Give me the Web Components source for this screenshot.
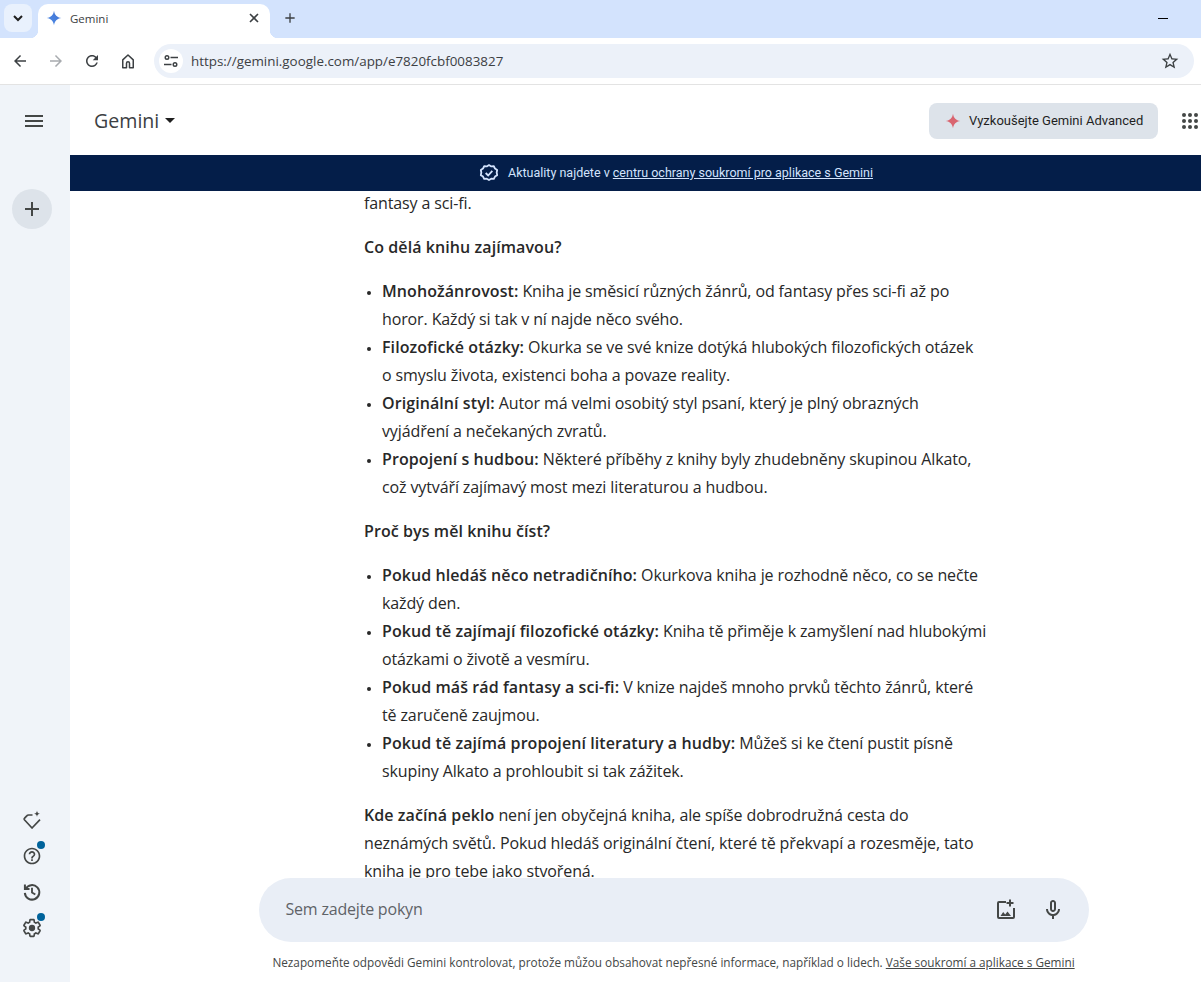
<!DOCTYPE html>
<html lang="cs">
<head>
<meta charset="utf-8">
<title>Gemini</title>
<style>
  html, body { margin: 0; height: 100%; overflow: hidden; background: #fff; }
  body { display: flex; flex-direction: column; font-family: "Open Sans", sans-serif; color: #1f1f1f; }
  chat-view b { font-weight: 600; letter-spacing: .08px; }
  chat-view li::marker { font-size: 12px; }
</style>
</head>
<body>
<tab-strip></tab-strip>
<tool-bar url="https://gemini.google.com/app/e7820fcbf0083827"></tool-bar>
<gemini-app>
  <side-nav slot="nav"></side-nav>
  <app-header slot="main"></app-header>
  <notice-banner slot="main">
    Aktuality najdete v <a>centru ochrany soukromí pro aplikace s Gemini</a>
  </notice-banner>
  <chat-view slot="main">
    <p>fantasy a sci-fi.</p>
    <p><b>Co dělá knihu zajímavou?</b></p>
    <ul>
      <li><b>Mnohožánrovost:</b> Kniha je směsicí různých žánrů, od fantasy přes sci-fi až po horor. Každý si tak v ní najde něco svého.</li>
      <li><b>Filozofické otázky:</b> Okurka se ve své knize dotýká hlubokých filozofických otázek o&nbsp;smyslu života, existenci boha a povaze reality.</li>
      <li><b>Originální styl:</b> Autor má velmi osobitý styl psaní, který je plný obrazných vyjádření a nečekaných zvratů.</li>
      <li><b>Propojení s hudbou:</b> Některé příběhy z knihy byly zhudebněny skupinou Alkato, což vytváří zajímavý most mezi literaturou a hudbou.</li>
    </ul>
    <p><b>Proč bys měl knihu číst?</b></p>
    <ul>
      <li><b>Pokud hledáš něco netradičního:</b> Okurkova kniha je rozhodně něco, co se nečte každý den.</li>
      <li><b>Pokud tě zajímají filozofické otázky:</b> Kniha tě přiměje k zamyšlení nad hlubokými otázkami o životě a vesmíru.</li>
      <li><b>Pokud máš rád fantasy a sci-fi:</b> V knize najdeš mnoho prvků těchto žánrů, které tě zaručeně zaujmou.</li>
      <li><b>Pokud tě zajímá propojení literatury a hudby:</b> Můžeš si ke čtení pustit písně skupiny Alkato a prohloubit si tak zážitek.</li>
    </ul>
    <p><b>Kde začíná peklo</b> není jen obyčejná kniha, ale spíše dobrodružná cesta do neznámých světů. Pokud hledáš originální čtení, které tě překvapí a rozesměje, tato kniha je pro tebe jako stvořená.</p>
  </chat-view>
  <prompt-box slot="main"></prompt-box>
</gemini-app>
<script>
const SPARK_FAT = "M12 1C13 7.500 16.500 11 23 12 16.500 13 13 16.500 12 23 11 16.500 7.500 13 1 12 7.500 11 11 7.500 12 1z";

const define = (name, html) =>
  customElements.define(
    name,
    class extends HTMLElement {
      constructor() {
        super();
        this.attachShadow({ mode: "open" }).innerHTML = html;
      }
    }
  );

define("tab-strip", `
  <style>
    :host { display: flex; height: 38px; background: #d3e3fd; align-items: flex-start; flex: none; font-family: "Open Sans", sans-serif; }
    .list { width: 28px; height: 28px; margin: 4px 6px 0 4px; border-radius: 8px; background: #e9f1fd; display: grid; place-items: center; }
    .tab { position: relative; width: 232px; height: 34px; margin-top: 4px; background: #fff; border-radius: 10px 10px 0 0; display: flex; align-items: center; box-sizing: border-box; padding: 0 11px 6px 8px; font-size: 11.500px; color: #3c4043; }
    .tab::before, .tab::after { content: ""; position: absolute; bottom: 0; width: 8px; height: 8px; }
    .tab::before { left: -8px; background: radial-gradient(circle at 0 0, transparent 8px, #fff 8.500px); }
    .tab::after { right: -8px; background: radial-gradient(circle at 100% 0, transparent 8px, #fff 8.500px); }
    .title { margin-left: 8px; flex: 1; }
    .plus { margin: 10px 0 0 12px; }
    .min { margin: 18px 33px 0 auto; width: 10px; height: 1px; background: #000; }
    svg { display: block; }
  </style>
  <div class="list"><svg width="10" height="7" viewBox="0 0 10 7"><path d="M1 1l4 4 4-4" fill="none" stroke="#1f1f1f" stroke-width="2"/></svg></div>
  <div class="tab">
    <svg width="16" height="16" viewBox="0 0 24 24"><defs><linearGradient id="t" x1="0" y1="1" x2="1" y2="0"><stop offset="0" stop-color="#4f8ee8"/><stop offset="1" stop-color="#3f6fd0"/></linearGradient></defs><path d="${SPARK_FAT}" fill="url(#t)"/></svg>
    <span class="title">Gemini</span>
    <svg width="10" height="10" viewBox="0 0 10 10"><path d="M1 1l8 8M9 1l-8 8" stroke="#3c4043" stroke-width="1.600"/></svg>
  </div>
  <div class="plus"><svg width="16" height="16" viewBox="0 0 24 24"><path d="M19 13h-6v6h-2v-6H5v-2h6V5h2v6h6v2z" fill="#3c4043"/></svg></div>
  <div class="min"></div>
`);

customElements.define(
  "tool-bar",
  class extends HTMLElement {
    constructor() {
      super();
      this.attachShadow({ mode: "open" }).innerHTML = `
        <style>
          :host { display: flex; height: 47px; box-sizing: border-box; border-bottom: 1px solid #e3e3e3; background: #fff; align-items: center; flex: none; font-family: "Open Sans", sans-serif; padding: 0 7px 0 11px; }
          .btn { width: 18px; height: 18px; margin-right: 18px; }
          svg { display: block; }
          .omni { flex: 1; height: 34px; border-radius: 17px; background: #ecf1f9; display: flex; align-items: center; padding: 0 14px 0 5px; font-size: 13.400px; color: #3c4043; margin-left: -1px; }
          .tune { width: 24px; height: 24px; border-radius: 50%; background: #fff; display: grid; place-items: center; margin-right: 8px; }
          .url { flex: 1; }
        </style>
        <svg class="btn" viewBox="0 0 24 24"><path d="M20 11H7.830l5.590-5.590L12 4l-8 8 8 8 1.410-1.410L7.830 13H20v-2z" fill="#3c4043"/></svg>
        <svg class="btn" viewBox="0 0 24 24"><path d="M4 11h12.170l-5.590-5.590L12 4l8 8-8 8-1.410-1.410L16.170 13H4v-2z" fill="#a8abaf"/></svg>
        <svg class="btn" viewBox="0 0 24 24"><path d="M17.650 6.350C16.200 4.900 14.210 4 12 4c-4.420 0-7.990 3.580-7.990 8s3.570 8 7.990 8c3.730 0 6.840-2.550 7.730-6h-2.080c-.82 2.330-3.040 4-5.650 4-3.310 0-6-2.690-6-6s2.690-6 6-6c1.660 0 3.140.69 4.220 1.780L13 11h7V4l-2.350 2.350z" fill="#3c4043"/></svg>
        <svg class="btn" viewBox="0 0 24 24"><path d="M5 21V10.500L12 4l7 6.500V21h-5v-6a2 2 0 0 0-4 0v6z" fill="none" stroke="#3c4043" stroke-width="2" stroke-linejoin="round"/></svg>
        <div class="omni">
          <div class="tune"><svg width="16" height="16" viewBox="0 0 16 16"><g fill="none" stroke="#3c4043" stroke-width="1.400"><circle cx="4" cy="4.500" r="1.800"/><path d="M7.500 4.500H15M1 11.500h7.500"/><circle cx="12" cy="11.500" r="1.800"/></g></svg></div>
          <span class="url">${this.getAttribute("url")}</span>
          <svg width="20" height="20" viewBox="0 0 24 24"><path d="M22 9.240l-7.190-.62L12 2 9.190 8.630 2 9.240l5.460 4.730L5.820 21 12 17.270 18.180 21l-1.630-7.030L22 9.240zM12 15.400l-3.760 2.270 1-4.280-3.320-2.880 4.380-.38L12 6.100l1.710 4.040 4.380.38-3.320 2.880 1 4.280L12 15.400z" fill="#3c4043"/></svg>
        </div>`;
    }
  }
);

define("gemini-app", `
  <style>
    :host { display: flex; flex: 1; min-height: 0; }
    main { flex: 1; min-width: 0; display: flex; flex-direction: column; }
  </style>
  <slot name="nav"></slot>
  <main><slot name="main"></slot></main>
`);

define("side-nav", `
  <style>
    :host { width: 70px; flex: none; background: #f0f4f9; display: flex; flex-direction: column; align-items: center; padding: 0 6px 0 0; box-sizing: border-box; }
    svg { display: block; }
    .menu { margin: 24px 0 0 4px; }
    .new { margin-top: 56px; width: 40px; height: 40px; border-radius: 50%; background: #dde3ea; display: grid; place-items: center; }
    .bottom { margin-top: auto; padding-bottom: 44px; display: flex; flex-direction: column; gap: 16px; }
    .item { position: relative; width: 20px; height: 20px; }
    .dot { position: absolute; right: -3px; top: -5px; width: 8px; height: 8px; border-radius: 50%; background: #00639b; }
  </style>
  <svg class="menu" width="24" height="24" viewBox="0 0 24 24"><path d="M3 18h18v-2H3v2zm0-5h18v-2H3v2zm0-7v2h18V6H3z" fill="#444746"/></svg>
  <div class="new"><svg width="24" height="24" viewBox="0 0 24 24"><path d="M19 13h-6v6h-2v-6H5v-2h6V5h2v6h6v2z" fill="#444746"/></svg></div>
  <div class="bottom">
    <div class="item"><svg width="20" height="20" viewBox="0 0 20 20"><path d="M10.500 5H6.500Q5.500 5 5 5.600L2.400 8.400 Q1.800 9 2.400 9.700L10 18 18 9.700" fill="none" stroke="#444746" stroke-width="1.700" stroke-linejoin="round"/><path d="M15 .5c.3 2.200 1 3 3.200 3.300-2.200.3-2.900 1-3.200 3.200-.3-2.200-1-2.900-3.200-3.200 2.200-.3 2.900-1.100 3.200-3.300z" fill="#444746"/></svg></div>
    <div class="item"><svg width="20" height="20" viewBox="0 0 24 24"><path d="M11 18h2v-2h-2v2zm1-16C6.480 2 2 6.480 2 12s4.480 10 10 10 10-4.480 10-10S17.520 2 12 2zm0 18c-4.410 0-8-3.590-8-8s3.590-8 8-8 8 3.590 8 8-3.590 8-8 8zm0-14c-2.210 0-4 1.790-4 4h2c0-1.100.9-2 2-2s2 .9 2 2c0 2-3 1.750-3 5h2c0-2.250 3-2.500 3-5 0-2.210-1.790-4-4-4z" fill="#444746"/></svg><span class="dot"></span></div>
    <div class="item"><svg width="20" height="20" viewBox="0 0 24 24"><path d="M3.500 3v5.500h5.500M4.300 8.500A8.700 8.700 0 1 1 3.400 13" fill="none" stroke="#444746" stroke-width="2.400"/><path d="M12 7V12.500l4 2.500" fill="none" stroke="#444746" stroke-width="2.200"/></svg></div>
    <div class="item"><svg width="20" height="20" viewBox="0 0 24 24"><path d="M19.430 12.980c.04-.32.07-.64.07-.98s-.03-.66-.07-.98l2.110-1.650c.19-.15.24-.42.12-.64l-2-3.460c-.12-.22-.39-.3-.61-.22l-2.490 1c-.52-.4-1.080-.73-1.690-.98l-.38-2.650C14.460 2.180 14.250 2 14 2h-4c-.25 0-.46.18-.49.42l-.38 2.650c-.61.25-1.170.59-1.690.98l-2.490-1c-.23-.09-.49 0-.61.22l-2 3.460c-.13.22-.07.49.12.64l2.110 1.650c-.04.32-.07.65-.07.98s.03.66.07.98l-2.110 1.650c-.19.15-.24.42-.12.64l2 3.460c.12.22.39.3.61.22l2.490-1c.52.4 1.080.73 1.690.98l.38 2.650c.03.24.24.42.49.42h4c.25 0 .46-.18.49-.42l.38-2.650c.61-.25 1.170-.59 1.690-.98l2.490 1c.23.09.49 0 .61-.22l2-3.460c.12-.22.07-.49-.12-.64l-2.110-1.650z" fill="none" stroke="#444746" stroke-width="2"/><circle cx="12" cy="12" r="3.800" fill="#444746"/></svg><span class="dot"></span></div>
  </div>
`);

define("app-header", `
  <style>
    :host { display: flex; align-items: center; height: 70px; flex: none; padding: 2px 3px 0 24px; box-sizing: border-box; }
    .logo { font-size: 19.600px; color: #3c4043; margin-top: -2px; }
    .caret { margin: -2px 0 0 6px; width: 0; height: 0; border: 5px solid transparent; border-top-color: #1f1f1f; border-bottom: 0; }
    .try { margin-left: auto; width: 229px; height: 36px; box-sizing: border-box; border-radius: 8px; background: #dde3ea; display: flex; align-items: center; padding: 0 0 1px 16px; gap: 8px; font: 400 13px Roboto, sans-serif; color: #1f1f1f; }
    .apps { margin-left: 24px; display: grid; grid-template-columns: repeat(3, 4px); gap: 2px; }
    .apps i { width: 4px; height: 4px; border-radius: 50%; background: #444746; }
    svg { display: block; }
  </style>
  <span class="logo">Gemini</span><span class="caret"></span>
  <div class="try"><svg width="16" height="16" viewBox="0 0 24 24"><path d="${SPARK_FAT}" fill="#d96570"/></svg>Vyzkoušejte Gemini Advanced</div>
  <div class="apps"><i></i><i></i><i></i><i></i><i></i><i></i><i></i><i></i><i></i></div>
`);

define("notice-banner", `
  <style>
    :host { display: flex; align-items: center; justify-content: center; gap: 9px; height: 36px; flex: none; background: #041e49; color: #d3e3fd; font: 12.500px Roboto, sans-serif; padding-left: 81px; position: relative; z-index: 1; }
    ::slotted(a) { text-decoration: underline; }
    svg { display: block; }
    span { margin-top: -1px; }
  </style>
  <svg width="20" height="20" viewBox="0 0 24 24"><path d="M12 2.500l2.700 1.600 3.100-.2 1.400 2.800 2.600 1.700-.6 3.100.6 3.100-2.600 1.700-1.400 2.800-3.100-.2-2.700 1.600-2.700-1.600-3.100.2-1.400-2.800-2.600-1.700.6-3.100-.6-3.100 2.600-1.700 1.400-2.800 3.100.2z" fill="none" stroke="#d3e3fd" stroke-width="2.200" stroke-linejoin="round"/><path d="M8 12l3 3 5-5.500" fill="none" stroke="#d3e3fd" stroke-width="2.200"/></svg>
  <span><slot></slot></span>
`);

define("chat-view", `
  <style>
    :host { display: block; flex: 1; min-height: 0; overflow: hidden; padding-left: 294px; font-size: 16px; letter-spacing: -.12px; line-height: 28px; color: #282828; }
    .col { width: 624px; margin-top: -2px; }
    ::slotted(p) { margin: 0 0 16px; }
    ::slotted(ul) { margin: 0 0 16px; padding-left: 18px; }
  </style>
  <div class="col"><slot></slot></div>
`);

define("prompt-box", `
  <style>
    :host { display: flex; flex-direction: column; align-items: center; flex: none; height: 104px; box-sizing: border-box; padding: 0 0 0 76px; background: #fff; }
    .box { width: 830px; height: 64px; border-radius: 32px; background: #e9eef6; display: flex; align-items: center; box-sizing: border-box; padding: 0 24px 0 27px; color: #5f6368; font-size: 16px; letter-spacing: -.2px; }
    .hint { flex: 1; margin-top: -2px; }
    svg { display: block; margin-top: -1px; }
    .mic { margin-left: 24px; }
    small { font-size: 11.770px; line-height: 16px; margin-top: 12px; color: #444746; white-space: nowrap; }
  </style>
  <div class="box">
    <span class="hint">Sem zadejte pokyn</span>
    <svg width="24" height="24" viewBox="0 0 24 24"><path d="M13 3H6a2 2 0 0 0-2 2v14a2 2 0 0 0 2 2h14a2 2 0 0 0 2-2V10h-2v9H6V5h7z" fill="#444746"/><path d="M18 1.500v2.500h2.500v2H18v2.500h-2V6h-2.500V4H16V1.500z" fill="#444746"/><path d="M7.500 18l2.700-4 2 2.500 2.300-3 3.500 4.500z" fill="#444746"/></svg>
    <svg class="mic" width="24" height="24" viewBox="0 0 24 24"><path d="M12 14c1.660 0 3-1.340 3-3V5c0-1.660-1.340-3-3-3S9 3.340 9 5v6c0 1.660 1.340 3 3 3zm-1-9c0-.55.45-1 1-1s1 .45 1 1v6c0 .55-.45 1-1 1s-1-.45-1-1V5zm6 6c0 2.760-2.240 5-5 5s-5-2.240-5-5H5c0 3.530 2.610 6.430 6 6.920V21h2v-3.080c3.390-.49 6-3.390 6-6.920h-2z" fill="#444746"/></svg>
  </div>
  <small>Nezapomeňte odpovědi Gemini kontrolovat, protože můžou obsahovat nepřesné informace, například o lidech. <u>Vaše soukromí a aplikace s Gemini</u></small>
`);
</script>
</body>
</html>
